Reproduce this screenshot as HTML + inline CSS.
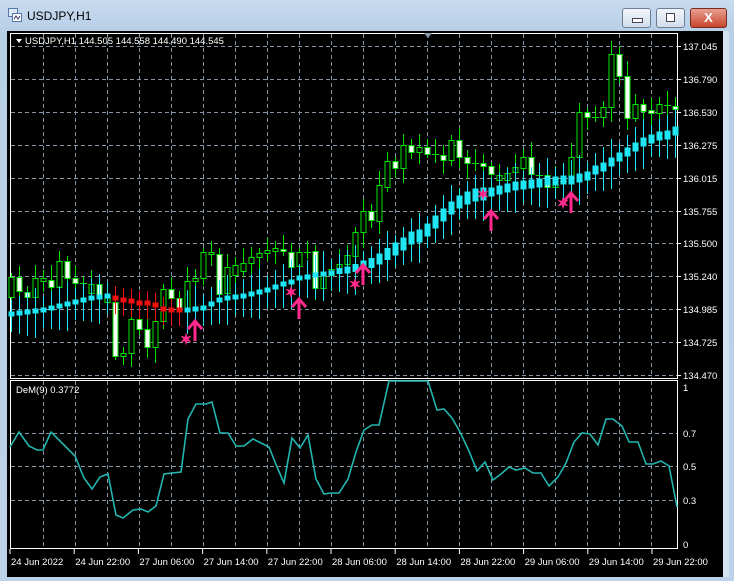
<!DOCTYPE html>
<html><head><meta charset="utf-8"><style>
html,body{margin:0;padding:0;width:734px;height:581px;overflow:hidden;background:#bed4ea;font-family:"Liberation Sans",sans-serif}
#win{position:absolute;left:0;top:0;width:734px;height:581px;background:linear-gradient(#c9dcef,#b8cfe8 30px,#bcd2ea);}
#title{position:absolute;left:27px;top:9px;font-size:12px;color:#000}
.btn{position:absolute;top:8px;height:18px;border:1px solid #6d7f95;border-radius:3px;background:linear-gradient(#f2f6fb,#d2ddea)}
#chart{position:absolute;left:7px;top:31px;width:716px;height:546px;background:#000}
#sb{position:absolute;left:723px;top:31px;width:6px;height:546px;background:#d5e2f0}
svg text{font-family:"Liberation Sans",sans-serif;fill:#fff;font-size:9.5px}
</style></head><body>
<div id="win">
<svg style="position:absolute;left:8px;top:8px" width="14" height="15"><rect x="0.5" y="0.5" width="9" height="8" fill="#dfe9f5" stroke="#5577aa"/><rect x="4.5" y="5.5" width="9" height="8" fill="#fff" stroke="#5577aa"/><path d="M6 11 L8 8 L10 11 L12 8" stroke="#336" fill="none"/></svg>
<div id="title">USDJPY,H1</div>
<div class="btn" style="left:622px;width:27px"><div style="position:absolute;left:9px;top:9px;width:9px;height:3px;background:#fff;border:1px solid #445"></div></div>
<div class="btn" style="left:656px;width:27px"><div style="position:absolute;left:9px;top:4px;width:7px;height:7px;border:1px solid #445;background:#fff"></div></div>
<div class="btn" style="left:690px;width:35px;background:linear-gradient(#e8a090,#c8452e);border-color:#7a2a1e"><div style="position:absolute;left:0;width:35px;top:1px;text-align:center;color:#fff;font-weight:bold;font-size:13px">X</div></div>
<div id="chart"></div><div id="sb"></div>
<svg id="s" style="position:absolute;left:0;top:0" width="734" height="581">
<g stroke="#fff" fill="none" stroke-width="1">
<rect x="10.5" y="33.5" width="667" height="345"/>
<rect x="10.5" y="380.5" width="667" height="168"/>
</g>
<g id="grid" stroke="#8595a5" stroke-dasharray="4,3" stroke-width="1"></g>
<g id="cand"></g><g id="cy"></g><g id="sig"></g>
<polyline id="dem" fill="none" stroke="#22b5b0" stroke-width="1.6"/>
<path d="M424 33 L432 33 L428 38 Z" fill="#8a9aaa"/>
<path d="M16 39 L22 39 L19 43 Z" fill="#fff"/>
<text x="25" y="44">USDJPY,H1  144.505 144.558 144.490 144.545</text>
<text x="16" y="393">DeM(9) 0.3772</text>
<g id="pl"></g>
<text x="683" y="391">1</text><text x="683" y="437">0.7</text><text x="683" y="470">0.5</text><text x="683" y="504">0.3</text><text x="683" y="548">0</text>
<g id="tl"></g>
</svg>
</div>
<script>
var NS="http://www.w3.org/2000/svg";
function el(p,t,a,txt){var e=document.createElementNS(NS,t);for(var k in a)e.setAttribute(k,a[k]);if(txt)e.textContent=txt;document.getElementById(p).appendChild(e);return e;}
var hy=[46,79,112,145,178,211,243,276,309,342,375],pr=["137.045","136.790","136.530","136.275","136.015","135.755","135.500","135.240","134.985","134.725","134.470"];
hy.forEach(function(y,i){el("grid","line",{x1:11,x2:677,y1:y+.5,y2:y+.5});el("grid","line",{x1:677,x2:681,y1:y+.5,y2:y+.5,"stroke-dasharray":"none",stroke:"#fff"});el("pl","text",{x:683,y:y+4},pr[i]);});
[433,466,500].forEach(function(y){el("grid","line",{x1:11,x2:677,y1:y+.5,y2:y+.5});});
for(var x=43;x<677;x+=32){el("grid","line",{x1:x+.5,x2:x+.5,y1:34,y2:378});el("grid","line",{x1:x+.5,x2:x+.5,y1:381,y2:548});}
var tls=["24 Jun 2022","24 Jun 22:00","27 Jun 06:00","27 Jun 14:00","27 Jun 22:00","28 Jun 06:00","28 Jun 14:00","28 Jun 22:00","29 Jun 06:00","29 Jun 14:00","29 Jun 22:00"];
tls.forEach(function(t,i){var x=10+64.2*i;el("tl","line",{x1:x,x2:x,y1:549,y2:554,stroke:"#fff"});el("tl","text",{x:x+1,y:565},t);});
var C=[["g",277,297],["w",277,291],["w",292,297],["g",278,297],["g",278,281],["w",280,287],["g",261,287],["w",261,278],["w",278,283],["c",283,283],["g",284,293],["w",284,296],["g",294,302],["w",302,356],["g",353,356],["g",319,353],["w",319,329],["w",329,347],["g",321,347],["g",289,321],["w",289,298],["w",298,311],["g",281,311],["g",278,281],["g",252,278],["g",252,254],["w",254,294],["g",267,293],["g",265,275],
["g",263,271],["g",257,263],["g",253,257],["g",250,253],["g",248,251],["w",249,251],["w",252,267],["g",252,266],["c",252,252],["w",251,288],["g",275,288],["g",269,275],["g",264,270],["g",255,264],["g",232,256],["g",211,232],["w",211,220],["g",185,221],["g",161,187],["w",161,168],["g",145,168],["w",145,152],["g",147,152],["w",147,154],["c",154,154],["w",155,160],["g",140,160],["w",140,157],["w",157,163],["c",163,163],
["w",163,166],["w",166,174],["g",175,180],["g",173,180],["g",167,172],["g",157,168],["w",157,174],["c",175,175],["w",175,187],["g",178,187],["c",181,181],["g",157,180],["g",112,157],["w",112,117],["c",117,117],["g",107,117],["g",54,107],["w",54,76],["w",76,118],["g",104,118],["w",104,111],["w",110,113],["g",104,113],["c",105,105],["w",106,109]];
C.forEach(function(c,i){var x=11+8*i,t=c[1],b=c[2],hi=t-(4+(i*7)%12),lo=b+(4+(i*5)%13);
el("cand","line",{x1:x+.5,x2:x+.5,y1:hi,y2:lo,stroke:"#00e600"});
if(c[0]=="c")el("cand","line",{x1:x-3,x2:x+4,y1:t+.5,y2:t+.5,stroke:"#00e600"});
else el("cand","rect",{x:x-2,y:t+.5,width:5,height:Math.max(b-t,2),fill:c[0]=="w"?"#fff":"#000",stroke:"#00e600"});});
var Y=[314,313,312,311,310,308,306,304,302,300,298,297,296,298,300,301,303,303,305,309,310,310,310,309,308,304,300,298,297,296,294,292,290,287,284,282,278,277,275,274,273,271,270,268,265,263,259,254,249,244,238,236,230,222,215,208,202,198,195,194,192,190,188,186,185,184,183,181,181,180,180,178,176,170,167,162,157,152,147,142,139,136,135,131];
Y.forEach(function(y,i){var x=11+8*i,red=(i>=13&&i<=21),col=red?"#f01010":"#1ee6f4";
var h=i<40?5:(i<60?(5+Math.min(i-40,8)):9);var wl=red?12:(14+(i%4)*3);
el("cy","line",{x1:x+.5,x2:x+.5,y1:y-wl,y2:y+wl+4,stroke:col});
el("cy","rect",{x:x-2.5,y:y-h/2,width:6,height:h,fill:col});});
function star(x,y){var p=[];for(var k=0;k<12;k++){var r=k%2?2.5:6.5,a=k*Math.PI/6;p.push((x+r*Math.sin(a)).toFixed(1)+","+(y-r*Math.cos(a)).toFixed(1));}el("sig","polygon",{points:p.join(" "),fill:"#ff2a8c"});}
function arr(x,y){el("sig","path",{d:"M"+(x-7)+" "+(y+8)+" L"+x+" "+y+" L"+(x+7)+" "+(y+8)+" M"+x+" "+y+" L"+x+" "+(y+20),stroke:"#ff2a8c","stroke-width":3,fill:"none"});}
[[186,339,195,321],[291,292,299,299],[355,284,363,265],[483,194,491,211],[563,203,571,193]].forEach(function(s){star(s[0],s[1]);arr(s[2],s[3]);});
document.getElementById("dem").setAttribute("points","10,447 19,432 29,446 37,450 43,450 51,432 59,440 67,448 75,456 84,478 92,489 100,477 108,474 116,515 123,518 133,510 141,509 148,512 156,506 164,474 181,472 188,419 196,404 206,404 212,402 220,433 228,433 236,446 244,446 253,439 261,443 269,447 277,467 284,483 292,438 300,448 308,435 316,479 324,494 331,493 339,493 348,479 356,452 364,430 372,425 379,425 389,381 428,381 437,410 444,409 452,418 460,432 469,451 477,471 485,462 493,480 501,474 509,467 516,470 525,468 533,473 541,473 549,486 558,477 566,463 574,442 582,433 590,434 598,445 606,419 613,419 622,426 629,442 638,442 646,464 653,464 661,461 669,466 677,507");
</script>
</body></html>
